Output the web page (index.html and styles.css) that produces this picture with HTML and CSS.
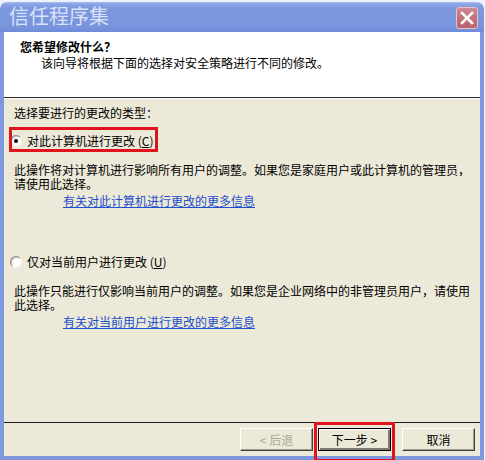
FILE: index.html
```html
<!DOCTYPE html>
<html lang="zh-CN">

<head>
    <meta charset="UTF-8">
    <title>信任程序集</title>
    <link rel="stylesheet" href="styles.css">
</head>

<body>
    <div class="window">
        <!-- Заголовок окна -->
        <div class="titlebar">
            <span class="title">信任程序集</span>
            <span class="close-button">
                <svg width="14" height="14" viewBox="0 0 14 14">
                    <path d="M2 2 L12 12 M12 2 L2 12" stroke="#fff" stroke-width="2.6" stroke-linecap="square" />
                </svg>
            </span>
        </div>

        <div class="frame">
            <div class="header">
                <div class="heading">您希望修改什么？</div>
                <div class="subheading">该向导将根据下面的选择对安全策略进行不同的修改。</div>
            </div>

            <div class="content">
                <div class="prompt">选择要进行的更改的类型：</div>

                <div class="option option-first">
                    <label class="radio-row">
                        <span class="radio checked"></span>
                        <span>对此计算机进行更改 (<u>C</u>)</span>
                    </label>
                    <span class="mark mark-option"></span>
                    <p class="desc">此操作将对计算机进行影响所有用户的调整。如果您是家庭用户或此计算机的管理员，请使用此选择。</p>
                    <a href="#" class="more-link">有关对此计算机进行更改的更多信息</a>
                </div>

                <div class="option option-second">
                    <label class="radio-row">
                        <span class="radio"></span>
                        <span>仅对当前用户进行更改 (<u>U</u>)</span>
                    </label>
                    <p class="desc">此操作只能进行仅影响当前用户的调整。如果您是企业网络中的非管理员用户，请使用此选择。</p>
                    <a href="#" class="more-link">有关对当前用户进行更改的更多信息</a>
                </div>
            </div>

            <div class="footer">
                <button class="button disabled">&lt; 后退</button>
                <span class="next-wrap">
                    <button class="button default-button">下一步 &gt;</button>
                    <span class="mark mark-next"></span>
                </span>
                <button class="button cancel-button">取消</button>
            </div>
        </div>
    </div>
</body>

</html>
```

FILE: styles.css
```css
html,
body {
    margin: 0;
    height: 100%;
    font-family: "Noto Sans CJK SC", "DejaVu Sans", sans-serif;
    font-size: 12px;
    color: #000;
}

body {
    background: #eef2fa;
    overflow: hidden;
}

.window {
    width: 484px;
    height: 458px;
    margin-top: 2px;
}

.titlebar {
    height: 30px;
    display: flex;
    align-items: center;
    padding: 0 6px 0 9px;
    border-radius: 7px 7px 0 0;
    background: linear-gradient(#a9bdee 0, #8ba4e5 2px, #7c98df 6px, #7894dd 85%, #6f8ad8 100%);
    box-sizing: border-box;
}

.title {
    font-size: 20px;
    color: #d9e2f8;
    line-height: 30px;
    padding-bottom: 2px;
}

.close-button {
    margin-left: auto;
    width: 22px;
    height: 22px;
    display: flex;
    justify-content: center;
    align-items: center;
    background: linear-gradient(#cf8891, #bf6f79 60%, #b6656f);
    border: 1px solid #e9c0c5;
    border-radius: 3px;
    box-sizing: border-box;
    margin-top: 2px;
}

.frame {
    height: 428px;
    border: 4px solid #7d98df;
    border-top: none;
    box-sizing: border-box;
    display: flex;
    flex-direction: column;
    background: #ece9d8;
}

.header {
    height: 66px;
    background: #fff;
    padding: 8px 0 0 16px;
    box-sizing: border-box;
    border-bottom: 1px solid #2a2a2a;
    line-height: 14px;
}

.heading {
    font-weight: bold;
    margin-bottom: 2px;
}

.subheading {
    padding-left: 21px;
}

.content {
    height: 324px;
    border-top: 1px solid #fff;
    padding: 7px 4px 0 10px;
    box-sizing: border-box;
    line-height: 14px;
}

.option {
    position: relative;
}

.option-first {
    margin-top: 14px;
}

.option-second {
    margin-top: 47px;
}

.radio-row {
    display: flex;
    align-items: center;
    gap: 5px;
    margin-left: -4px;
    height: 14px;
}

.radio {
    width: 12px;
    height: 12px;
    border-radius: 50%;
    background: #fff;
    border: 1px solid;
    border-color: #8a887c #f4f3ee #f4f3ee #8a887c;
    box-shadow: inset 1px 1px 0 #c9c6b8;
    box-sizing: border-box;
    position: relative;
}

.radio.checked::after {
    content: "";
    position: absolute;
    left: 3px;
    top: 3px;
    width: 4px;
    height: 4px;
    border-radius: 50%;
    background: #000;
}

.desc {
    margin: 15px 0 0;
}

.more-link {
    display: inline-block;
    margin: 3px 0 0 49px;
    color: #1e4fcc;
    text-decoration: underline;
}

.footer {
    flex: 1;
    border-top: 1px solid #1d1d1d;
    display: flex;
    justify-content: flex-end;
    align-items: flex-start;
    padding: 5px 5px 0 0;
    box-sizing: border-box;
}

.button {
    width: 73px;
    height: 23px;
    padding: 0;
    font-family: inherit;
    font-size: 12px;
    color: #000;
    background: #ece9d8;
    border: 1px solid;
    border-color: #fff #404040 #404040 #fff;
    box-shadow: inset -1px -1px 0 #9d9a8c;
    box-sizing: border-box;
}

.button.disabled {
    color: #aca899;
    margin-right: 5px;
}

.default-button {
    border: 1px solid #000;
    box-shadow: inset 1px 1px 0 #fff, inset -2px -2px 0 #7c7a6e;
}

.next-wrap {
    position: relative;
    display: flex;
    margin-right: 11px;
}

.mark {
    position: absolute;
    border: 3px solid #e0141e;
    box-sizing: border-box;
}

.mark-option {
    left: -5px;
    top: -7px;
    width: 149px;
    height: 25px;
}

.mark-next {
    left: -4px;
    top: -6px;
    width: 81px;
    height: 40px;
}
```
